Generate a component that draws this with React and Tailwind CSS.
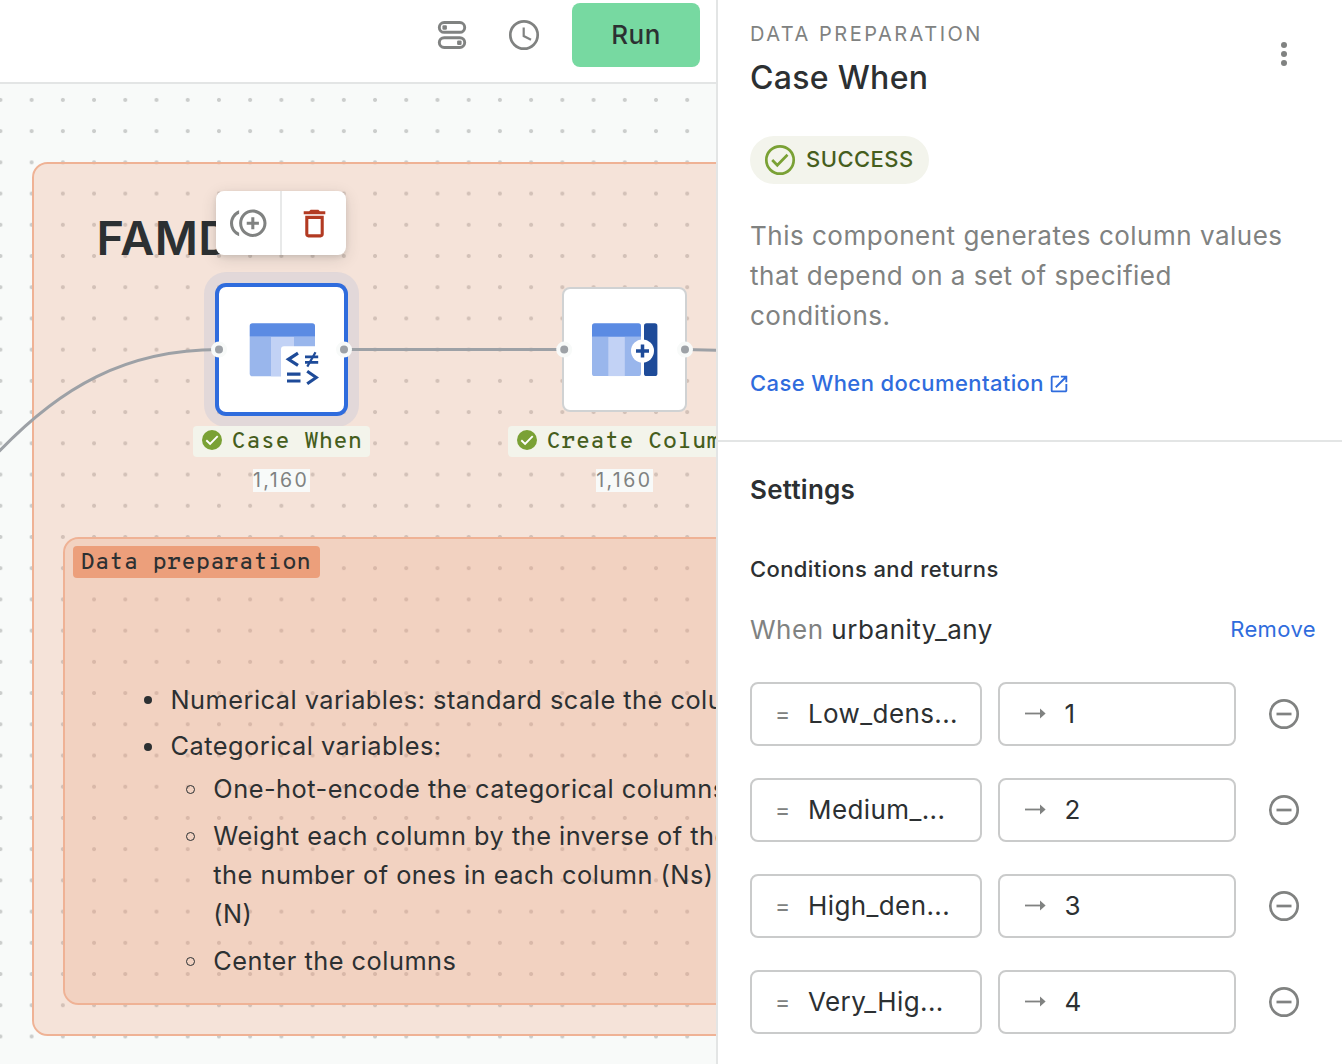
import React from "react";
import { MdControlPointDuplicate, MdDeleteOutline, MdOpenInNew } from "react-icons/md";

function ToggleIcon() {
  return (
    <svg width="30" height="30" viewBox="0 0 30 30" fill="none" stroke="#808281" strokeWidth="2.9">
      <rect x="2.3" y="2.5" width="25.4" height="9.8" rx="4.9" />
      <rect x="2.3" y="17.7" width="25.4" height="9.8" rx="4.9" />
      <rect x="5.4" y="5.2" width="4.5" height="4.5" rx="1.2" fill="#808281" stroke="none" />
      <rect x="20.1" y="20.4" width="4.5" height="4.5" rx="1.2" fill="#808281" stroke="none" />
    </svg>
  );
}

function ClockIcon() {
  return (
    <svg width="32" height="32" viewBox="0 0 32 32" fill="none" stroke="#808281">
      <circle cx="16" cy="16" r="13.7" strokeWidth="2.7" />
      <path d="M15.7 8.6V17L23 20.8" strokeWidth="2.2" />
    </svg>
  );
}

function MinusCircle() {
  return (
    <svg width="32" height="32" viewBox="0 0 32 32" fill="none" stroke="#808281" strokeWidth="2.7">
      <circle cx="16" cy="16" r="13.7" />
      <path d="M8.5 16h15" />
    </svg>
  );
}

function CaseWhenIcon() {
  return (
    <svg width="70" height="64" viewBox="0 0 70 64" fill="none">
      <path d="M.7 14H66v36.4a2.8 2.8 0 0 1-2.8 2.8H3.5A2.8 2.8 0 0 1 .7 50.4z" fill="#99B6EC" />
      <path d="M22 14h23v39.2H22z" fill="#C2D2F5" />
      <path d="M3.5.2H63.2A2.8 2.8 0 0 1 66 3v10.8H.7V3A2.8 2.8 0 0 1 3.5.2z" fill="#5B8BE3" />
      <path d="M35 23.3H70V64H32V26.3a3 3 0 0 1 3-3z" fill="#fff" />
      <g stroke="#1E4B99" strokeWidth="3.2">
        <path d="M49 30.2L39.5 36.3L49 42.4" />
        <path d="M56 33.8h13.2M56 39.4h13.2" strokeWidth="2.8" />
        <path d="M66.5 29.3L58.3 43.6" strokeWidth="2.2" />
        <path d="M38 51.2h13.5M38 58h13.5" />
        <path d="M58.2 48.3L67.3 54.5L58.2 60.7" />
      </g>
    </svg>
  );
}

function CreateColumnIcon() {
  return (
    <svg width="68" height="56" viewBox="0 0 68 56" fill="none">
      <path d="M0 13.5H49v37a2.6 2.6 0 0 1-2.6 2.6H2.6A2.6 2.6 0 0 1 0 50.5z" fill="#99B6EC" />
      <path d="M16.3 13.5h16.5v39.6H16.3z" fill="#C2D2F5" />
      <path d="M2.6.3H46.4A2.6 2.6 0 0 1 49 2.9v10.8H0V2.9A2.6 2.6 0 0 1 2.6.3z" fill="#5B8BE3" />
      <rect x="52" y=".3" width="13.4" height="52.8" rx="2.6" fill="#1E4B99" />
      <circle cx="50.5" cy="28" r="11.5" fill="#fff" />
      <path d="M44 28h13M50.5 21.5v13" stroke="#1E4B99" strokeWidth="3.5" />
    </svg>
  );
}

function StatusDot() {
  return (
    <svg width="20" height="20" viewBox="0 0 20 20" fill="none" className="mb-[2.5px] shrink-0">
      <circle cx="10" cy="10" r="10" fill="#7AA135" />
      <path d="M4.3 10.2L8.1 13.9L15.7 6.2" stroke="#fff" strokeWidth="1.9" />
    </svg>
  );
}

function NodeLabel({ className, children }) {
  return (
    <div className={`absolute top-[425.7px] flex h-[31.2px] items-center gap-2.5 rounded bg-[#F3F4EB] pr-2 pl-[9px] font-['Overpass_Mono',monospace] text-[23.4px] leading-[31px] font-medium whitespace-nowrap text-[#465E1D] ${className}`}>
      <StatusDot />
      <span className="pt-[2px] tracking-[0.1px]">{children}</span>
    </div>
  );
}

function Count({ className }) {
  return (
    <div className={`absolute top-[468.7px] h-[23.4px] w-[57px] bg-[#F8FAF9] text-[19.5px] leading-[23.4px] tracking-[2.4px] text-[#808281] ${className}`}>
      1,160
    </div>
  );
}

function Canvas() {
  return (
    <div className="relative flex-1 overflow-hidden bg-[#F8FAF9] bg-[radial-gradient(circle,#CBCDCC_1.7px,transparent_2.3px)] bg-size-[31.22px_31.22px] bg-position-[-15.21px_.3px]">
      <div className="absolute -top-21 left-0 h-[1064px] w-[716px]">
        <section className="absolute top-[162.3px] left-[31.8px] h-[874px] w-[760px] rounded-[15.6px] border-2 border-[#EFB295] bg-[#ECA07C]/25 bg-clip-padding">
          <h1 className="absolute top-[44px] left-[62.6px] text-[46.8px] leading-[60px] font-semibold tracking-[0.5px] text-[#2C3032]">FAMD</h1>
        </section>

        <section className="absolute top-[537.2px] left-[63px] h-[467.5px] w-[760px] rounded-[15.6px] border-2 border-[#EFB295] bg-[#ECA07C]/25 bg-clip-padding text-[#2C3032]">
          <div className="mt-[7.2px] ml-[7.7px] inline-flex h-[31.2px] w-[247px] items-center rounded bg-[#EC9F7B] pt-[3px] pl-[7.8px] font-['Overpass_Mono',monospace] text-[23.4px] leading-[31px] font-medium whitespace-nowrap">
            Data preparation
          </div>
          <ul className="absolute top-[140.6px] left-[105.5px] w-[620px] text-[25.35px] leading-[39px] tracking-[0.49px] whitespace-nowrap">
            {["Numerical variables: standard scale the columns", "Categorical variables:"].map((t) => (
              <li key={t} className="relative mb-[7.2px]">
                <span className="absolute top-[16.6px] -left-[27px] size-2 rounded-full bg-[#2C3032]" />
                {t}
              </li>
            ))}
            <ul className="-mt-[3.5px] ml-[42.8px]">
              {["One-hot-encode the categorical columns", "Weight each column by the inverse of the\nthe number of ones in each column (Ns)\n(N)", "Center the columns"].map((t) => (
                <li key={t} className="relative mb-[8px] whitespace-pre">
                  <span className="absolute top-[16.8px] -left-[27.2px] size-[9px] rounded-full border-[1.3px] border-[#2C3032]" />
                  {t}
                </li>
              ))}
            </ul>
          </ul>
        </section>

        <div className="absolute top-[272px] left-[203.5px] h-[154.5px] w-[155.5px] rounded-[22px] bg-[#2F6CDD]/[0.09]" />
        <svg className="absolute top-0 left-0" width="716" height="600" fill="none" stroke="#9DA1A6" strokeWidth="3">
          <path d="M-2 452.5L0 450.5C60 388 125 349.5 219 349.5M344 349.5H564M685 349.5L718 350.3" />
        </svg>

        <div className="absolute top-[283.3px] left-[215.2px] flex size-[132.5px] rounded-[11px] border-4 border-[#2F6CDD] bg-white pt-[35.7px] pl-[29.8px]">
          <CaseWhenIcon />
        </div>
        <div className="absolute top-[287.3px] left-[562.4px] flex size-[124.8px] rounded-[8px] border-2 border-[#D0D2D3] bg-white pt-[33.7px] pl-[27.4px]">
          <CreateColumnIcon />
        </div>
        <svg className="absolute top-0 left-0" width="716" height="400" fill="#9DA1A6" stroke="#F8FAF9" strokeWidth="4">
          <circle cx="219" cy="349.6" r="6" />
          <circle cx="344" cy="349.6" r="6" />
          <circle cx="564.2" cy="349.6" r="6" />
          <circle cx="685" cy="349.6" r="6" />
        </svg>

        <NodeLabel className="left-[192.7px] w-[177.3px]">Case When</NodeLabel>
        <NodeLabel className="left-[507.8px]">Create Column</NodeLabel>
        <Count className="left-[253px]" />
        <Count className="left-[596.2px]" />

        <div className="absolute top-[191px] left-[216.4px] flex h-16 w-[130px] rounded-lg bg-white shadow-[0_4px_16px_rgba(44,48,50,0.14),0_2px_5px_rgba(44,48,50,0.12)]">
          <div className="flex flex-1 items-center justify-center border-r-2 border-[#E8E9E9] text-[#808281]">
            <MdControlPointDuplicate size={36.5} />
          </div>
          <div className="flex w-16 items-center justify-center text-[#B23A22]">
            <MdDeleteOutline size={37} />
          </div>
        </div>
      </div>
    </div>
  );
}

const rows = [["Low_dens...", "1"], ["Medium_...", "2"], ["High_den...", "3"], ["Very_Hig...", "4"]];

function Panel() {
  return (
    <aside className="flex flex-1 flex-col border-l-2 border-[#E3E5E5] bg-white text-[#2C3032]">
      <header className="relative h-[442px] border-b-2 border-[#E3E5E5] pt-[19px] pl-8">
        <p className="text-[20px] leading-[30px] tracking-[2.5px] text-[#808281]">DATA PREPARATION</p>
        <h2 className="mt-2 text-[32px] leading-[42px] font-medium tracking-[0.3px]">Case When</h2>
        <svg className="absolute top-[38px] left-[550px]" width="32" height="32" fill="#808281">
          <circle cx="16" cy="7" r="3" />
          <circle cx="16" cy="16" r="3" />
          <circle cx="16" cy="25" r="3" />
        </svg>
        <div className="mt-[37px] flex h-12 w-[179px] items-center gap-2.5 rounded-full bg-[#F3F4EC] pl-3.5 text-[22px] font-medium tracking-[0.45px] text-[#465E1D]">
          <svg width="32" height="32" viewBox="0 0 32 32" fill="none" stroke="#7AA135" strokeWidth="2.7">
            <circle cx="16" cy="16" r="13.7" />
            <path d="M8.2 16L13.3 21.2L23.5 10.8" />
          </svg>
          <span className="pb-[2px]">SUCCESS</span>
        </div>
        <p className="mt-8 text-[26px] leading-10 tracking-[0.5px] text-[#808281]">
          This component generates column values<br />that depend on a set of specified<br />conditions.
        </p>
        <a className="mt-[31px] flex items-center gap-1 text-[22px] leading-8 font-medium tracking-[0.4px] text-[#2F6CDD]">
          Case When documentation <MdOpenInNew size={22} className="mt-px" />
        </a>
      </header>
      <div className="pt-8 pl-8">
        <h3 className="text-[26px] leading-8 font-semibold tracking-[0.25px]">Settings</h3>
        <h4 className="mt-[47px] text-[22px] leading-8 font-medium tracking-[0.4px]">Conditions and returns</h4>
        <div className="mt-6 flex h-10 items-center justify-between pr-[26px]">
          <p className="text-[26px] tracking-[0.5px]"><span className="text-[#808281]">When</span> urbanity_any</p>
          <button className="text-[22px] tracking-[0.4px] text-[#2F6CDD]">Remove</button>
        </div>
        <div className="mt-[33px] flex flex-col gap-8">
          {rows.map(([name, value]) => (
            <div key={value} className="flex items-center gap-4 text-[26px] tracking-[0.4px]">
              <div className="flex h-16 w-[232px] items-center rounded-lg border-2 border-[#CACBCB] pl-[23px]">
                <span className="w-[33px] text-[23px] text-[#808281]">=</span>
                <span className="pb-[2px]">{name}</span>
              </div>
              <div className="flex h-16 w-[238px] items-center rounded-lg border-2 border-[#CACBCB] pl-[25px]">
                <svg width="39.5" height="12" viewBox="0 0 39.5 12">
                  <path d="M0 5.5H16" stroke="#808281" strokeWidth="1.8" />
                  <path d="M15 .5L20.6 5.5L15 10.5z" fill="#808281" />
                </svg>
                <span className="pb-[2px]">{value}</span>
              </div>
              <button className="ml-4"><MinusCircle /></button>
            </div>
          ))}
        </div>
      </div>
    </aside>
  );
}

export default function App() {
  return (
    <div className="flex h-[1064px] w-[1342px] overflow-hidden bg-white font-['Inter',sans-serif]">
      <main className="flex w-[716px] shrink-0 flex-col">
        <div className="flex h-21 items-start justify-end border-b-2 border-[#E3E5E5] pt-[3px] pr-4">
          <div className="flex h-16 items-center">
            <ToggleIcon />
            <span className="w-[41px]" />
            <ClockIcon />
            <button className="ml-8 h-16 w-32 rounded-lg bg-[#77D9A1] pb-[2px] text-[26px] font-medium tracking-[0.5px] text-[#2C3032]">Run</button>
          </div>
        </div>
        <Canvas />
      </main>
      <Panel />
    </div>
  );
}
